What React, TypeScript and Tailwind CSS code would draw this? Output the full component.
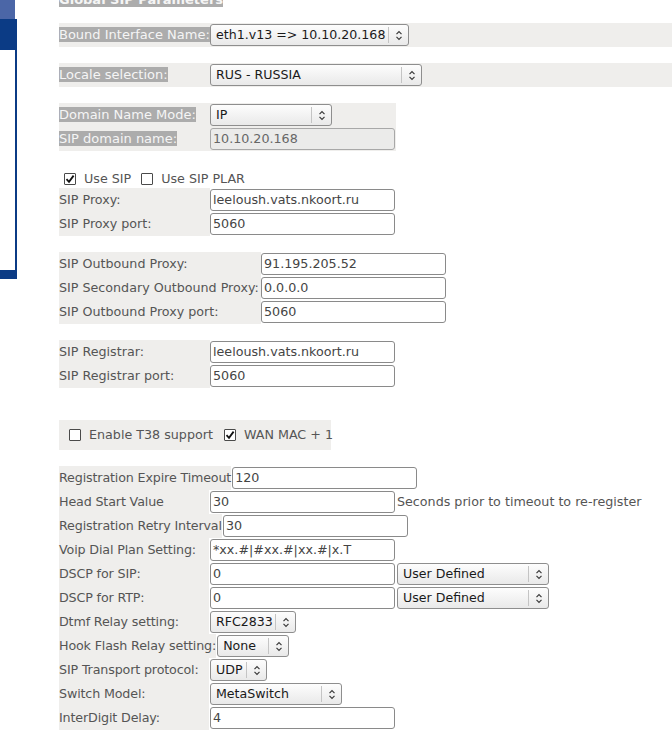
import React from 'react';

const band = 'bg-[#efeeec]';

function UpDown() {
    return (
        <svg width="8" height="11" viewBox="0 0 8 11" fill="none" stroke="#3a3a3a" strokeWidth="1.2">
            <path d="M1.5 4.2 L4 1.7 L6.5 4.2" />
            <path d="M1.5 6.8 L4 9.3 L6.5 6.8" />
        </svg>
    );
}

function Select({ value, w, className = '' }: { value: string; w: string; className?: string }) {
    return (
        <div
            className={`${w} ${className} h-[22px] flex items-center rounded-[3px] border border-[#8e8e8e] bg-gradient-to-b from-[#fdfdfd] to-[#e9e9e9] text-[#1a1a1a] text-[12.6px] shrink-0`}
        >
            <span className="flex-1 pl-[5px] whitespace-nowrap overflow-hidden">{value}</span>
            <span className="w-px h-[16px] bg-[#c4c4c4]" />
            <span className="w-[19px] flex items-center justify-center">
                <UpDown />
            </span>
        </div>
    );
}

function Input({ value, w = 'w-[185px]', disabled = false, className = '' }: { value: string; w?: string; disabled?: boolean; className?: string }) {
    return (
        <div
            className={`${w} ${className} h-[22px] flex items-center rounded-[3px] border shrink-0 whitespace-nowrap overflow-hidden ${
                disabled ? 'bg-[#ebebea] border-[#a8a8a8] text-[#666] pl-[2px]' : 'bg-white border-[#8a8a8a] text-[#444] pl-[2px]'
            }`}
        >
            {value}
        </div>
    );
}

function Check({ checked }: { checked?: boolean }) {
    return (
        <span className="w-[12px] h-[12px] border border-[#4a4a4a] bg-white rounded-[1px] flex items-center justify-center shrink-0">
            {checked && (
                <svg width="10" height="10" viewBox="0 0 10 10" fill="none" stroke="#111" strokeWidth="1.8">
                    <path d="M1.5 5.2 L4 7.8 L8.6 1.6" />
                </svg>
            )}
        </span>
    );
}

function Hl({ children }: { children: React.ReactNode }) {
    return <span className="bg-[#acacac] text-[#f5f5f5] text-[13px] leading-[15px]">{children}</span>;
}

function Row({ label, children }: { label: string; children: React.ReactNode }) {
    return (
        <div className="h-[24px] flex items-center">
            <div className={`${band} h-[24px] min-w-[150px] flex items-center whitespace-nowrap tracking-[-0.15px]`}>{label}</div>
            <div className="flex items-center ml-[1px]">{children}</div>
        </div>
    );
}

export default function App() {
    return (
        <div className="w-[672px] h-[755px] bg-white overflow-hidden flex font-['DejaVu_Sans',sans-serif] text-[12.7px] text-[#555]">
            {/* left panel edge */}
            <div className="w-[17px] shrink-0 flex flex-col">
                <div className="h-[19px] w-[15px] bg-[#4b66a7]" />
                <div className="h-[31px] bg-[#0b3b85]" />
                <div className="h-[220px] border-r-2 border-[#0b3b85] bg-white" />
                <div className="h-[9px] bg-[#0b3b85]" />
            </div>

            <div className="ml-[42px] flex-1 flex flex-col">
                <div className="-mt-[8px] h-[15px] flex">
                    <span className="bg-[#acacac] text-[#f5f5f5] text-[13px] font-bold leading-[15px] whitespace-nowrap">Global SIP Parameters</span>
                </div>

                {/* interface / locale / domain */}
                <div className={`${band} mt-[16px] h-[24px] flex items-center`}>
                    <div className="w-[151px] whitespace-nowrap">
                        <Hl>Bound Interface Name:</Hl>
                    </div>
                    <Select value="eth1.v13 => 10.10.20.168" w="w-[199px]" />
                </div>

                <div className={`${band} mt-[16px] h-[24px] flex items-center`}>
                    <div className="w-[151px] whitespace-nowrap">
                        <Hl>Locale selection:</Hl>
                    </div>
                    <Select value="RUS - RUSSIA" w="w-[212px]" />
                </div>

                <div className={`${band} mt-[16px] w-[337px] flex flex-col`}>
                    <div className="h-[24px] flex items-center">
                        <div className="w-[151px] whitespace-nowrap">
                            <Hl>Domain Name Mode:</Hl>
                        </div>
                        <Select value="IP" w="w-[122px]" />
                    </div>
                    <div className="h-[24px] flex items-center">
                        <div className="w-[151px] whitespace-nowrap">
                            <Hl>SIP domain name:</Hl>
                        </div>
                        <Input value="10.10.20.168" disabled />
                    </div>
                </div>

                {/* SIP checkboxes */}
                <div className="mt-[19px] h-[18px] flex items-center pl-[5px] whitespace-nowrap">
                    <Check checked />
                    <span className="ml-[8px]">Use SIP</span>
                    <span className="ml-[10px]"><Check /></span>
                    <span className="ml-[8px]">Use SIP PLAR</span>
                </div>

                <div className="flex flex-col">
                    <div className="h-[24px] flex items-center">
                        <div className={`${band} h-[24px] w-[151px] flex items-center`}>SIP Proxy:</div>
                        <Input value="leeloush.vats.nkoort.ru" />
                    </div>
                    <div className="h-[24px] flex items-center">
                        <div className={`${band} h-[24px] w-[151px] flex items-center`}>SIP Proxy port:</div>
                        <Input value="5060" />
                    </div>
                </div>

                <div className="mt-[16px] flex flex-col">
                    <div className="h-[24px] flex items-center">
                        <div className={`${band} h-[24px] w-[202px] flex items-center whitespace-nowrap`}>SIP Outbound Proxy:</div>
                        <Input value="91.195.205.52" />
                    </div>
                    <div className="h-[24px] flex items-center">
                        <div className={`${band} h-[24px] w-[202px] flex items-center whitespace-nowrap`}>SIP Secondary Outbound Proxy:</div>
                        <Input value="0.0.0.0" />
                    </div>
                    <div className="h-[24px] flex items-center">
                        <div className={`${band} h-[24px] w-[202px] flex items-center whitespace-nowrap`}>SIP Outbound Proxy port:</div>
                        <Input value="5060" />
                    </div>
                </div>

                <div className="mt-[16px] flex flex-col">
                    <div className="h-[24px] flex items-center">
                        <div className={`${band} h-[24px] w-[151px] flex items-center`}>SIP Registrar:</div>
                        <Input value="leeloush.vats.nkoort.ru" />
                    </div>
                    <div className="h-[24px] flex items-center">
                        <div className={`${band} h-[24px] w-[151px] flex items-center`}>SIP Registrar port:</div>
                        <Input value="5060" />
                    </div>
                </div>

                {/* T38 */}
                <div className={`${band} mt-[32px] h-[30px] w-[272px] flex items-center pl-[10px] whitespace-nowrap`}>
                    <Check />
                    <span className="ml-[8px]">Enable T38 support</span>
                    <span className="ml-[11px]"><Check checked /></span>
                    <span className="ml-[8px]">WAN MAC + 1</span>
                </div>

                {/* misc settings */}
                <div className="mt-[16px] flex flex-col">
                    <Row label="Registration Expire Timeout">
                        <Input value="120" />
                    </Row>
                    <Row label="Head Start Value">
                        <Input value="30" />
                        <span className="ml-[2px] whitespace-nowrap">Seconds prior to timeout to re-register</span>
                    </Row>
                    <Row label="Registration Retry Interval">
                        <Input value="30" />
                    </Row>
                    <Row label="Voip Dial Plan Setting:">
                        <Input value="*xx.#|#xx.#|xx.#|x.T" />
                    </Row>
                    <Row label="DSCP for SIP:">
                        <Input value="0" />
                        <Select value="User Defined" w="w-[152px]" className="ml-[2px]" />
                    </Row>
                    <Row label="DSCP for RTP:">
                        <Input value="0" />
                        <Select value="User Defined" w="w-[152px]" className="ml-[2px]" />
                    </Row>
                    <Row label="Dtmf Relay setting:">
                        <Select value="RFC2833" w="w-[86px]" />
                    </Row>
                    <Row label="Hook Flash Relay setting:">
                        <Select value="None" w="w-[72px]" />
                    </Row>
                    <Row label="SIP Transport protocol:">
                        <Select value="UDP" w="w-[57px]" />
                    </Row>
                    <Row label="Switch Model:">
                        <Select value="MetaSwitch" w="w-[132px]" />
                    </Row>
                    <Row label="InterDigit Delay:">
                        <Input value="4" />
                    </Row>
                </div>
            </div>
        </div>
    );
}
